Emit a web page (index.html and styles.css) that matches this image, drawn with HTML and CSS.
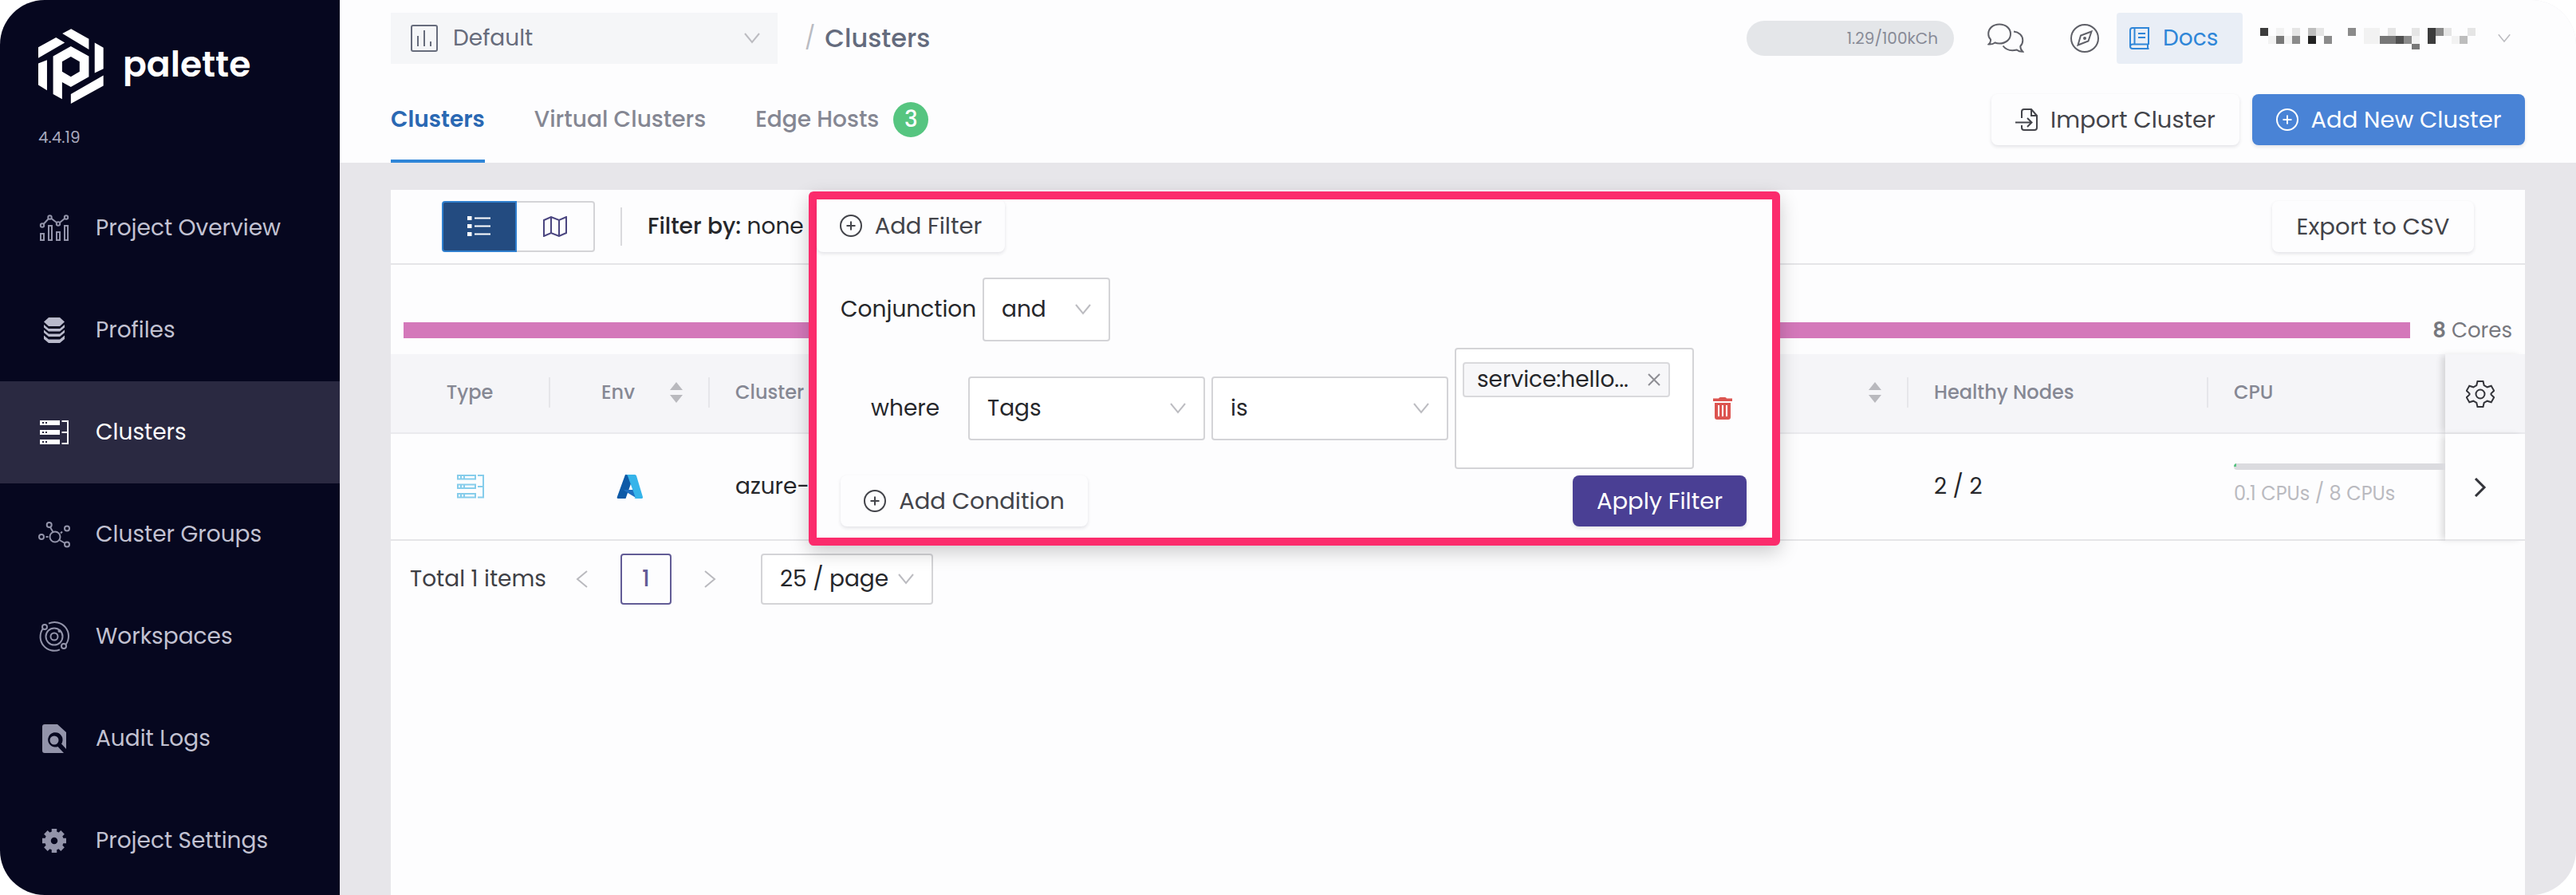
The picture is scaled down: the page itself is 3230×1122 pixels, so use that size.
FILE: index.html
```html
<!DOCTYPE html>
<html lang="en">
<head>
<meta charset="utf-8">
<title>Clusters - palette</title>
<link rel="stylesheet" href="styles.css">
</head>
<body>
<svg class="defs" aria-hidden="true">
  <symbol id="chevron" viewBox="0 0 20 14"><path d="M1 1l9 11 9-11"/></symbol>
  <symbol id="plus-circle" viewBox="0 0 28 28"><circle cx="14" cy="14" r="13"/><path d="M14 8.500v11M8.500 14h11"/></symbol>
  <symbol id="sorter" viewBox="0 0 16 26"><path d="M8 0l8 10H0zM8 26l8-10H0z"/></symbol>
</svg>
<div class="app">
  <aside class="sidebar">
    <div class="brand">
      <svg class="brand-mark" viewBox="144 100 247 264" preserveAspectRatio="none" aria-hidden="true">
        <path fill-rule="evenodd" d="M235 117L268 101L335 136V173ZM357 149L390 167V241L357 256ZM144 165L211 131L244 149L144 203ZM144 222L177 210V317L144 298ZM267 330L390 264V301L267 364ZM200 197L267 162L335 197V269L267 305L234 288V348L200 330ZM234 216V251L267 269L300 251V216L267 198Z"/>
      </svg>
      <span class="brand-name">palette</span>
    </div>
    <div class="version">4.4.19</div>
    <nav class="nav">
      <a class="nav-item" href="#overview">
        <svg class="nav-icon" viewBox="0 0 40 40"><path d="M3 27h4v8H3zM13 17h4v18h-4zM23 25h4v10h-4zM33 17h4v18h-4zM6.500 15l6.500-7M16.500 8l6.500 5M27 13l6-5"/><circle cx="5" cy="16.500" r="2.200"/><circle cx="14.500" cy="6.500" r="2.200"/><circle cx="25" cy="14.500" r="2.200"/><circle cx="35" cy="6.500" r="2.200"/></svg>
        Project Overview</a>
      <a class="nav-item" href="#profiles">
        <svg class="nav-icon solid bright" viewBox="0 0 40 40"><path d="M13 4h14l6 5.500-6 5.500H13L7 9.500zM7 13l6 5h14l6-5v3.500l-6 5H13l-6-5zM7 19.500l6 5h14l6-5V23l-6 5H13l-6-5zM7 26.500l6 5h14l6-5v4.500l-6 5H13l-6-5z"/></svg>
        Profiles</a>
      <a class="nav-item active" href="#clusters" aria-current="page">
        <svg class="nav-icon" viewBox="0 0 40 40"><path class="fill" d="M2 5h25v6H2zM2 17h25v6H2zM2 29h25v6H2z"/><path d="M29.500 6H37v28h-7.500M29.500 20H37"/><path class="dots" d="M5 8h2M9 8h2M5 20h2M9 20h2M5 32h2M9 32h2"/></svg>
        Clusters</a>
      <a class="nav-item" href="#groups">
        <svg class="nav-icon" viewBox="0 0 40 40"><circle cx="21" cy="23" r="6.500"/><circle cx="13.700" cy="8" r="3"/><circle cx="36" cy="12.500" r="3"/><circle cx="4" cy="23" r="3"/><circle cx="36" cy="32.500" r="3"/><path d="M15 11l3.500 6M26.500 27l7 4M9.500 23h3M28 18.500l2-2"/></svg>
        Cluster Groups</a>
      <a class="nav-item" href="#workspaces">
        <svg class="nav-icon" viewBox="0 0 40 40"><circle cx="20" cy="20" r="4.500"/><circle cx="20" cy="20" r="10.500"/><circle cx="8" cy="8" r="3"/><circle cx="32" cy="32" r="3"/><path d="M13 3.700A17.500 17.500 0 0 1 34.500 30M27 36.300A17.500 17.500 0 0 1 5.500 10.500"/><circle class="fill" cx="26.500" cy="13" r="2"/></svg>
        Workspaces</a>
      <a class="nav-item" href="#audit">
        <svg class="nav-icon solid" viewBox="0 0 40 40"><path fill-rule="evenodd" d="M8 2h16l11 10v21l-6-6.500A9.200 9.200 0 1 0 24.500 30l7.500 8H8q-3 0-3-3V5q0-3 3-3z"/><circle cx="20" cy="22" r="5.500"/></svg>
        Audit Logs</a>
      <a class="nav-item" href="#settings">
        <svg class="nav-icon" viewBox="0 0 40 40"><circle cx="20" cy="20" r="8" stroke-width="7.500"/><path stroke-width="6.500" d="M20 5v5M20 30v5M5 20h5M30 20h5M9.400 9.400l3.500 3.500M27.100 27.100l3.500 3.500M9.400 30.600l3.500-3.500M27.100 12.900l3.500-3.500"/></svg>
        Project Settings</a>
    </nav>
  </aside>

  <div class="page">
    <header class="header">
      <div class="topbar">
        <label class="select project-select">
          <svg class="lead-icon" viewBox="0 0 34 34"><rect x="1" y="1" width="32" height="32" rx="2"/><path d="M9 14v13M17 7v20M25 21v6"/></svg>
          <select aria-label="Project"><option>Default</option></select>
          <svg class="chevron"><use href="#chevron"/></svg>
        </label>
        <div class="crumb"><span class="slash">/</span><h1>Clusters</h1></div>
        <div class="tools">
          <div class="usage">1.29/100kCh</div>
          <button class="icon-btn chat" aria-label="Chat">
            <svg viewBox="0 0 46 38"><path d="M15 1.500c8 0 14 5 14 12s-6 12-14 12c-2 0-4-.4-5.500-1Q6 27 1.500 26.500 4.500 24 4 20.500C2 18.500 1.200 16 1.200 13.500c0-7 5.800-12 13.800-12zM33 10.500c6.500.8 11.300 5 11.300 11 0 3-1 5.500-3 7.500 0 3 1 5 3 6.800q-4.500.2-7.500-2.300C29 35.500 23 33 19.500 28.500"/></svg>
          </button>
          <button class="icon-btn" aria-label="Explore">
            <svg viewBox="0 0 36 36"><circle cx="18" cy="18" r="17"/><path d="M26.500 9.500l-4 12L9.500 26.500l3.500-12z"/><circle cx="18" cy="18" r="1"/></svg>
          </button>
          <a class="docs" href="#docs">
            <svg viewBox="0 0 26 28"><path d="M24 22V1H4Q1 1 1 4v20q0 3 3 3h20.500M24 21.500H4q-3 0-3 3M23 22v5M6.500 1v20M11 8h9M11 13h9"/></svg>
            Docs</a>
          <button class="user" aria-label="Account">
            <svg class="user-name" viewBox="0 0 270 27" shape-rendering="crispEdges">
              <path fill="#3c3c3c" d="M0 0h10v10H0zM210 0h10v20h-10z"/>
              <path fill="#222" d="M60 10h10v10H60z"/>
              <path fill="#505050" d="M170 10h10v10h-10z"/>
              <path fill="#777" d="M20 10h10v10H20zM150 10h20v10h-20zM190 20h10v7h-10z"/>
              <path fill="#8b8b8b" d="M40 10h10v10H40zM80 10h10v10H80zM110 0h10v10h-10zM220 0h10v10h-10zM180 10h10v10h-10z"/>
              <path fill="#bdbdbd" d="M60 0h10v10H60zM250 10h10v10h-10z"/>
              <path fill="#e5e5e5" d="M40 0h10v10H40zM70 0h10v10H70zM160 0h10v10h-10zM190 0h10v10h-10zM230 0h10v10h-10zM260 0h10v10h-10z"/>
              <path fill="#f2f2f2" d="M20 0h10v10H20zM10 10h10v10H10zM30 10h10v10H30zM130 0h20v20h-20zM190 10h10v10h-10zM240 10h10v10h-10z"/>
            </svg>
            <svg class="chevron small"><use href="#chevron"/></svg>
          </button>
        </div>
      </div>
      <div class="tabbar">
        <nav class="tabs">
          <a class="tab active" href="#clusters">Clusters</a>
          <a class="tab" href="#virtual">Virtual Clusters</a>
          <a class="tab" href="#edge">Edge Hosts <span class="count">3</span></a>
        </nav>
        <div class="actions">
          <button class="btn import">
            <svg class="btn-icon" viewBox="0 0 28 28"><path d="M8 12V4q0-3 3-3h9l7 8v15q0 3-3 3H11q-3 0-3-3v-3M20 1v8h7M0 17.500h20M15 12l5.500 5.500L15 23"/></svg>
            Import Cluster</button>
          <button class="btn primary"><svg class="btn-icon"><use href="#plus-circle"/></svg>Add New Cluster</button>
        </div>
      </div>
    </header>

    <main class="main">
      <section class="card">
        <div class="toolbar">
          <div class="view-toggle">
            <button class="active" aria-label="List view"><svg viewBox="0 0 30 26"><path class="fill" d="M0 0h5.500v5H0zM0 10h5.500v5H0zM0 20h5.500v5H0z"/><path d="M9 2.500h20M9 12.500h20M9 22.500h20"/></svg></button>
            <button aria-label="Map view"><svg viewBox="0 0 30 26"><path d="M1 5l9-4 10 4 9-4v20l-9 4-10-4-9 4zM10 1v20M20 5v20"/></svg></button>
          </div>
          <span class="divider"></span>
          <div class="filter-by"><b>Filter by:</b> none</div>
          <button class="btn export">Export to CSV</button>
        </div>

        <div class="cores">
          <div class="cores-bar"></div>
          <div class="cores-label"><b>8</b> Cores</div>
        </div>

        <table class="table">
          <colgroup><col class="c-type"><col class="c-env"><col><col class="c-nodes"><col class="c-cpu"><col class="c-more"></colgroup>
          <thead>
            <tr>
              <th><div class="th center">Type</div></th>
              <th><div class="th env">Env<svg class="sorter"><use href="#sorter"/></svg></div></th>
              <th><div class="th spread">Cluster<svg class="sorter"><use href="#sorter"/></svg></div></th>
              <th><div class="th">Healthy Nodes</div></th>
              <th><div class="th last">CPU</div></th>
              <th class="fixed"><button class="icon-btn dark" aria-label="Table settings"><svg viewBox="0 0 36 36"><path d="M14.500 2h7l1.200 5 4 2.300 5-1.500 3.500 6-3.700 3.600v1.200l3.700 3.600-3.500 6-5-1.500-4 2.300-1.200 5h-7l-1.200-5-4-2.300-5 1.500-3.500-6 3.700-3.600v-1.200L.8 13.800l3.500-6 5 1.500 4-2.300z"/><circle cx="18" cy="18" r="5.500"/></svg></button></th>
            </tr>
          </thead>
          <tbody>
            <tr>
              <td class="center"><svg class="type-icon" viewBox="0 0 34 30"><path d="M1 1h22v4.500H1zM1 12.500h22V17H1zM1 24h22v4.500H1zM5 1v4.500M9 1v4.500M5 12.500V17M9 12.500V17M5 24v4.500M9 24v4.500M26 1h7v27.500h-7M26 15h7"/></svg></td>
              <td class="center"><svg class="azure" viewBox="0 0 34 32"><path fill="#0d5aa7" d="M11 1h11L11.500 31H2q-2 0-1-2.500z"/><path fill="#1e6fc0" d="M9 20h14l3 11-15-9z"/><path fill="#35b4ea" d="M12 1h11q1.500 0 2 1.500L33 29q.5 2-1.500 2H22q2 0 1.500-2L14 2.500Q13.500 1 12 1z"/></svg></td>
              <td>azure-</td>
              <td>2 / 2</td>
              <td><div class="cpu"><meter min="0" max="8" value="0.100" aria-label="CPU use"></meter><span>0.1 CPUs / 8 CPUs</span></div></td>
              <td class="fixed"><button class="icon-btn dark" aria-label="Open cluster"><svg class="arrow" viewBox="0 0 16 24"><path d="M2 1l11 11L2 23"/></svg></button></td>
            </tr>
          </tbody>
        </table>

        <div class="pagination">
          <span class="total">Total 1 items</span>
          <button class="step" aria-label="Previous page"><svg viewBox="0 0 16 22"><path d="M14 1L2 11l12 10"/></svg></button>
          <button class="current">1</button>
          <button class="step" aria-label="Next page"><svg viewBox="0 0 16 22"><path d="M2 1l12 10L2 21"/></svg></button>
          <label class="select boxed page-size">
            <select aria-label="Page size"><option>25 / page</option></select>
            <svg class="chevron"><use href="#chevron"/></svg>
          </label>
        </div>

        <form class="filter-panel" onsubmit="return false">
          <button type="button" class="btn add-filter"><svg class="btn-icon"><use href="#plus-circle"/></svg>Add Filter</button>
          <div class="filter-body">
            <div class="conjunction">
              <label for="conj">Conjunction</label>
              <span class="select boxed">
                <select id="conj"><option>and</option></select>
                <svg class="chevron"><use href="#chevron"/></svg>
              </span>
            </div>
            <div class="condition">
              <label for="field">where</label>
              <span class="select boxed">
                <select id="field"><option>Tags</option></select>
                <svg class="chevron"><use href="#chevron"/></svg>
              </span>
              <span class="select boxed">
                <select aria-label="Operator"><option>is</option></select>
                <svg class="chevron"><use href="#chevron"/></svg>
              </span>
              <div class="tag-box">
                <span class="tag">service:hello... <button type="button" aria-label="Remove tag"><svg viewBox="0 0 16 16"><path d="M1 1l14 14M15 1L1 15"/></svg></button></span>
                <input type="text" aria-label="Add tag">
              </div>
              <button type="button" class="trash" aria-label="Delete condition"><svg viewBox="0 0 24 28"><path fill-rule="evenodd" d="M7 1.500Q7.500 0 9 0h6q1.500 0 2 1.500h7V5H0V1.500zM2 7h20v18q0 3-3 3H5q-3 0-3-3zM6 10v14h2V10zM11 10v14h2V10zM16 10v14h2V10z"/></svg></button>
            </div>
            <div class="panel-actions">
              <button type="button" class="btn add-condition"><svg class="btn-icon"><use href="#plus-circle"/></svg>Add Condition</button>
              <button class="btn apply">Apply Filter</button>
            </div>
          </div>
        </form>
      </section>
    </main>
  </div>
</div>
</body>
</html>
```
FILE: styles.css
```css
* { box-sizing: border-box; }

body {
  margin: 0;
  background: #fff;
  color: #26272b;
  font-family: "Poppins", "Inter", sans-serif;
  font-size: 28px;
  line-height: 40px;
  text-rendering: optimizeLegibility;
}

svg { display: block; fill: none; stroke: currentColor; stroke-width: 2; flex: none; }
button, select, input { font: inherit; color: inherit; margin: 0; text-rendering: inherit; }
button { background: none; border: 0; padding: 0; cursor: pointer; }
a { color: inherit; text-decoration: none; }
h1 { margin: 0; }
.defs { display: none; }

.app {
  display: flex;
  min-height: 100vh;
  border-radius: 56px;
  overflow: hidden;
}

/* Sidebar */
.sidebar { width: 426px; flex: none; background: #06071f; color: #c2c2d2; }
.brand { display: flex; align-items: center; gap: 24px; padding: 36px 48px 0; }
.brand-mark { width: 82px; height: 94px; fill: #fff; stroke: none; }
.brand-name { color: #fff; font-size: 44px; font-weight: 600; margin-bottom: 4px; }
.version { padding: 22px 48px 0; height: 92px; font-size: 20px; color: #a9a9be; }
.nav-item { display: flex; align-items: center; gap: 32px; height: 128px; padding: 0 48px; }
.nav-icon { width: 40px; height: 40px; color: #9394aa; }
.nav-icon .fill, .nav-icon.solid { fill: currentColor; stroke: none; }
.nav-icon.bright { color: #b9bacb; }
.nav-icon .dots { stroke: #2a2941; }
.nav-item.active { background: #2a2941; color: #fff; }
.nav-item.active .nav-icon { color: #fff; }

/* Header */
.page { flex: 1; min-width: 0; display: flex; flex-direction: column; background: #e7e6ea; }
.header { background: #fdfdfe; padding: 16px 64px 0; }
.topbar { display: flex; align-items: center; height: 64px; }
.select { display: grid; align-items: center; }
.select > * { grid-area: 1 / 1; }
.select select { appearance: none; width: 100%; height: 100%; border: 0; background: none; padding: 0 22px; outline: 0; }
.select.boxed { height: 80px; border: 2px solid #d4d4d7; border-radius: 4px; background: #fff; }
.chevron { width: 20px; height: 14px; color: #bcbcc1; justify-self: end; margin-right: 22px; pointer-events: none; }
.chevron.small { width: 16px; height: 12px; margin: 0; }
.project-select { width: 485px; height: 64px; background: #f5f6f8; color: #676c7c; }
.project-select select { padding-left: 78px; }
.lead-icon { width: 34px; height: 34px; margin-left: 25px; }
.crumb { display: flex; align-items: center; gap: 12px; margin-left: 34px; color: #646b7d; }
.crumb h1 { font-size: 32px; font-weight: 500; }
.slash { color: #b9bbc2; }
.tools { display: flex; align-items: center; margin-left: auto; padding-right: 18px; }
.usage { width: 260px; height: 44px; border-radius: 22px; background: #e4e6e9; color: #888b97; font-size: 20px; line-height: 44px; text-align: right; padding-right: 20px; }
.icon-btn { color: #5f6068; width: 36px; height: 36px; }
.icon-btn svg { width: 36px; height: 36px; }
.icon-btn.chat { width: 46px; height: 38px; margin: 0 58px 0 42px; }
.icon-btn.chat svg { width: 46px; height: 38px; }
.docs { display: flex; align-items: center; gap: 16px; width: 158px; height: 64px; margin: 0 22px; padding-left: 16px; border-radius: 4px; background: #e9eef6; color: #2f86d8; }
.docs svg { width: 26px; height: 28px; }
.user { display: flex; align-items: center; gap: 28px; }
.user-name { width: 270px; height: 27px; stroke: none; }

.tabbar { display: flex; justify-content: space-between; align-items: center; height: 108px; margin-top: 16px; }
.tabs { display: flex; gap: 62px; height: 108px; font-weight: 500; color: #858793; }
.tab { display: flex; align-items: center; gap: 18px; border-bottom: 4px solid transparent; border-top: 4px solid transparent; }
.tab.active { color: #2a68b3; font-weight: 600; border-bottom-color: #2f86d8; }
.count { width: 44px; height: 44px; border-radius: 50%; background: #56c580; color: #fff; line-height: 44px; text-align: center; }
.actions { display: flex; gap: 16px; }
.btn { display: flex; align-items: center; justify-content: center; gap: 16px; height: 64px; padding: 0 24px; border-radius: 8px; color: #43444a; font-size: 29px; box-shadow: 0 2px 4px rgba(30, 30, 60, 0.120); white-space: nowrap; }
.btn-icon { width: 28px; height: 28px; }
.import { width: 311px; }
.primary { width: 342px; background: #4983d6; color: #fff; }

/* Card */
.main { flex: 1; display: flex; padding: 34px 64px 0; }
.card { position: relative; flex: 1; min-width: 0; background: #fdfdfe; }
.toolbar { display: flex; align-items: center; padding: 14px 64px; border-bottom: 2px solid #e5e5e8; }
.view-toggle { display: flex; width: 192px; height: 64px; }
.view-toggle button { flex: 1; display: flex; align-items: center; justify-content: center; border: 2px solid #d4d4d7; border-left: 0; border-radius: 0 4px 4px 0; color: #4b4680; }
.view-toggle .active { flex: 0 0 94px; border: 2px solid #2f7fce; border-radius: 4px 0 0 4px; background: #234b80; color: #fff; }
.view-toggle svg { width: 30px; height: 26px; }
.view-toggle .fill { fill: currentColor; stroke: none; }
.divider { width: 2px; height: 48px; background: #dadadd; margin: 0 32px; }
.filter-by b { font-weight: 500; }
.export { width: 253px; margin-left: auto; }

.cores { display: flex; align-items: center; gap: 28px; padding: 60px 16px 8px; height: 112px; }
.cores-bar { flex: 1; height: 20px; background: #d478ba; }
.cores-label { color: #77787e; font-size: 26px; }
.cores-label b { font-weight: 600; }

.table { width: 100%; table-layout: fixed; border-spacing: 0; }
.c-type, .c-env { width: 200px; }
.c-nodes { width: 376px; }
.c-cpu { width: 297px; }
.c-more { width: 100px; }
.table th { height: 100px; padding: 0; background: #f5f5f8; border-bottom: 2px solid #eaeaee; text-align: left; font-size: 24px; font-weight: 500; color: #868894; }
.th { display: flex; align-items: center; height: 38px; padding: 0 32px; border-right: 2px solid #e6e6ea; margin-bottom: 2px; }
.th.center { justify-content: center; }
.th.env { padding: 0 32px 0 64px; justify-content: space-between; }
.th.spread { justify-content: space-between; }
.th.last { border: 0; }
.sorter { width: 16px; height: 26px; fill: #b9b9be; stroke: none; }
.table td { height: 134px; padding: 0 32px; border-bottom: 2px solid #e5e5e8; }
.table .fixed { padding: 0; text-align: center; box-shadow: -6px 0 8px -2px rgba(0, 0, 0, 0.140); }
.table td.fixed { background: #fdfdfe; }
.fixed .icon-btn { display: inline-flex; align-items: center; justify-content: center; vertical-align: middle; margin-right: 12px; }
.icon-btn.dark { color: #33343a; }
.icon-btn .arrow { width: 16px; height: 24px; stroke-width: 3; }
.type-icon { width: 34px; height: 30px; margin: 0 auto; color: #86cdeb; }
.azure { width: 34px; height: 32px; margin: 0 auto; stroke: none; }
.table td:nth-child(5) { padding-right: 0; }
.cpu { display: flex; flex-direction: column; gap: 10px; font-size: 24px; line-height: 40px; color: #babac0; }
.cpu meter { appearance: none; display: block; width: 100%; height: 8px; border-radius: 4px 0 0 4px; overflow: hidden; background: #dbdbdf; }
.cpu meter::-webkit-meter-inner-element { display: block; height: 8px; }
.cpu meter::-webkit-meter-bar { height: 8px; border: 0; border-radius: 0; background: #dbdbdf; }
.cpu meter::-webkit-meter-optimum-value { background: #56c580; }

.pagination { display: flex; align-items: center; padding: 16px 24px; }
.total { width: 184px; color: #3f4046; }
.step { display: flex; width: 64px; height: 64px; align-items: center; justify-content: center; color: #b9b9be; }
.step svg { width: 16px; height: 22px; }
.current { width: 64px; height: 64px; margin: 0 16px; border: 2px solid #625c96; border-radius: 4px; color: #625c96; font-weight: 500; }
.pagination .page-size { width: 216px; height: 64px; margin-left: 32px; }

/* Filter popover */
.filter-panel {
  position: absolute;
  left: 524px;
  top: 2px;
  width: 1218px;
  border: 10px solid #fb2c6c;
  border-radius: 6px;
  background: #fdfdfe;
  box-shadow: 0 8px 24px rgba(0, 0, 0, 0.200);
}
.add-filter { width: 236px; height: 66px; padding: 0; }
.filter-body { padding: 32px 32px 14px 30px; }
.conjunction { display: flex; align-items: center; }
.conjunction label { width: 178px; }
.conjunction .select { width: 160px; }
.condition { display: flex; align-items: center; gap: 8px; margin: 8px 0; }
.condition label { width: 152px; padding-left: 38px; }
.condition .select { width: 297px; }
.tag-box { width: 300px; height: 152px; padding: 16px 8px; border: 2px solid #d4d4d7; border-radius: 4px; background: #fff; }
.tag { display: flex; align-items: center; justify-content: space-between; width: 260px; height: 44px; padding: 0 10px 0 16px; border: 2px solid #d9d9dc; border-radius: 4px; background: #f7f7f9; white-space: nowrap; }
.tag svg { width: 16px; height: 16px; color: #8e8e94; }
.tag-box input { width: 100%; height: 44px; border: 0; background: none; outline: 0; padding: 0 16px; }
.trash { margin-left: 16px; }
.trash svg { width: 24px; height: 28px; fill: #dc5450; stroke: none; }
.panel-actions { display: flex; justify-content: space-between; }
.add-condition { width: 310px; }
.apply { width: 218px; background: #4a3f94; color: #fff; }
```
